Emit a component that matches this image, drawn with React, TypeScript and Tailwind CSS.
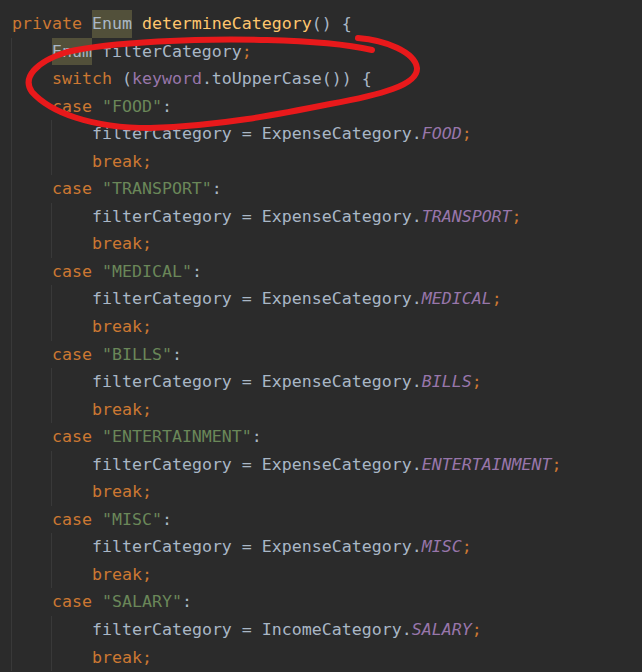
import React from "react";

type Tok = [string, string?];

const KW = "text-[#cc7832]";
const FN = "text-[#ffc66d]";
const STR = "text-[#6a8759]";
const FIELD = "text-[#9876aa]";
const CONST = "text-[#9876aa] italic";
const HL = "inline-block h-[27.56px] align-top bg-[#52503a]";

const cases: { label: string; owner: string; value: string }[] = [
  { label: "FOOD", owner: "ExpenseCategory", value: "FOOD" },
  { label: "TRANSPORT", owner: "ExpenseCategory", value: "TRANSPORT" },
  { label: "MEDICAL", owner: "ExpenseCategory", value: "MEDICAL" },
  { label: "BILLS", owner: "ExpenseCategory", value: "BILLS" },
  { label: "ENTERTAINMENT", owner: "ExpenseCategory", value: "ENTERTAINMENT" },
  { label: "MISC", owner: "ExpenseCategory", value: "MISC" },
  { label: "SALARY", owner: "IncomeCategory", value: "SALARY" },
];

function Line({ tokens, className = "" }: { tokens: Tok[]; className?: string }) {
  return (
    <div className={`h-[27.56px] leading-[27.56px] whitespace-pre ${className}`}>
      {tokens.map(([text, cls], i) => (
        <span key={i} className={cls}>
          {text}
        </span>
      ))}
    </div>
  );
}

function RedCircle() {
  return (
    <svg className="absolute left-0 top-0 pointer-events-none" width="642" height="672" viewBox="0 0 642 672">
      <path
        d="M358 38 C385 40, 415 52, 417 68 C418 85, 380 95, 330 104 C280 114, 220 126, 150 128 C90 128, 50 112, 32 92 C22 78, 35 62, 67 52 C110 42, 200 38, 267 40 C310 41, 350 45, 372 50"
        fill="none"
        stroke="#e8191b"
        strokeWidth="6"
        strokeLinecap="round"
        strokeLinejoin="round"
      />
    </svg>
  );
}

export default function App() {
  return (
    <div className="relative w-[642px] h-[672px] overflow-hidden bg-[#2b2b2b] text-[#a9b7c6] font-['DejaVu_Sans_Mono','Liberation_Mono',monospace] text-[16.6px]">
      <div className="pt-[10px] pl-[11px]">
        <Line
          className="pl-[1px]"
          tokens={[["private ", KW], ["Enum", HL], [" "], ["determineCategory", FN], ["() {"]]}
        />
        <div className="border-l border-[#393939]">
          <div className="pl-[40px]">
            <Line tokens={[["Enum", HL], [" filterCategory"], [";", KW]]} />
            <Line tokens={[["switch", KW], [" ("], ["keyword", FIELD], [".toUpperCase()) {"]]} />
          </div>
          {cases.map((c) => (
            <div key={c.label}>
              <Line className="pl-[40px]" tokens={[["case ", KW], [`"${c.label}"`, STR], [":"]]} />
              <div className="ml-[39px] border-l border-[#393939] pl-[40px]">
                <Line tokens={[[`filterCategory = ${c.owner}.`], [c.value, CONST], [";", KW]]} />
                <Line tokens={[["break;", KW]]} />
              </div>
            </div>
          ))}
        </div>
      </div>
      <RedCircle />
    </div>
  );
}
